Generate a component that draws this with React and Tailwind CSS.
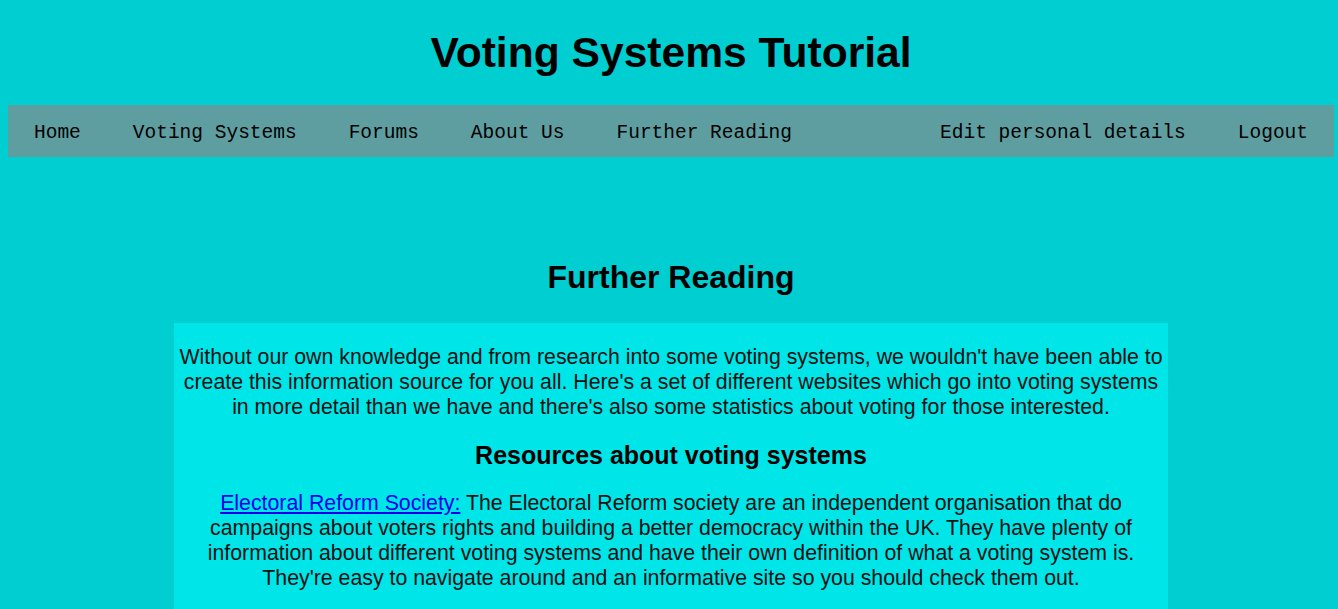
export default function App() {
  const left = ["Home", "Voting Systems", "Forums", "About Us", "Further Reading"];
  const right = ["Edit personal details", "Logout"];
  return (
    <div
      className="min-h-[609px] w-full bg-[#00ced1] pl-[8px] pr-[4px] text-black"
      style={{ fontFamily: '"Liberation Sans", Arial, sans-serif' }}
    >
      <h1 className="pt-[28px] text-center text-[42.6px] font-bold leading-[48px]">
        Voting Systems Tutorial
      </h1>
      <nav
        className="mt-[29px] flex h-[52px] items-center justify-between bg-[#5f9ea0] pt-[5px] text-[19.5px]"
        style={{ fontFamily: '"Liberation Mono", "DejaVu Sans Mono", monospace' }}
      >
        <ul className="flex">
          {left.map((t) => (
            <li key={t} className="px-[26px] whitespace-pre">
              {t}
            </li>
          ))}
        </ul>
        <ul className="flex">
          {right.map((t) => (
            <li key={t} className="px-[26px] whitespace-pre">
              {t}
            </li>
          ))}
        </ul>
      </nav>
      <h2 className="mt-[102px] text-center text-[32px] font-bold leading-[37px]">
        Further Reading
      </h2>
      <div className="mx-auto mt-[27px] w-[75%] bg-[#00e5e8] px-[5px] pt-[22px] pb-[30px] text-center text-[21.3px] leading-[25px] text-[#111]">
        <p>
          Without our own knowledge and from research into some voting systems, we wouldn't have
          been able to create this information source for you all. Here's a set of different
          websites which go into voting systems in more detail than we have and there's also some
          statistics about voting for those interested.
        </p>
        <h3 className="mt-[21px] text-[25px] font-bold leading-[29px] text-black">
          Resources about voting systems
        </h3>
        <p className="mt-[21px]">
          <a href="#" className="text-[#0000ee] underline">
            Electoral Reform Society:
          </a>{" "}
          The Electoral Reform society are an independent organisation that do campaigns about
          voters rights and building a better democracy within the UK. They have plenty of
          information about different voting systems and have their own definition of what a
          voting system is. They're easy to navigate around and an informative site so you should
          check them out.
        </p>
      </div>
    </div>
  );
}
